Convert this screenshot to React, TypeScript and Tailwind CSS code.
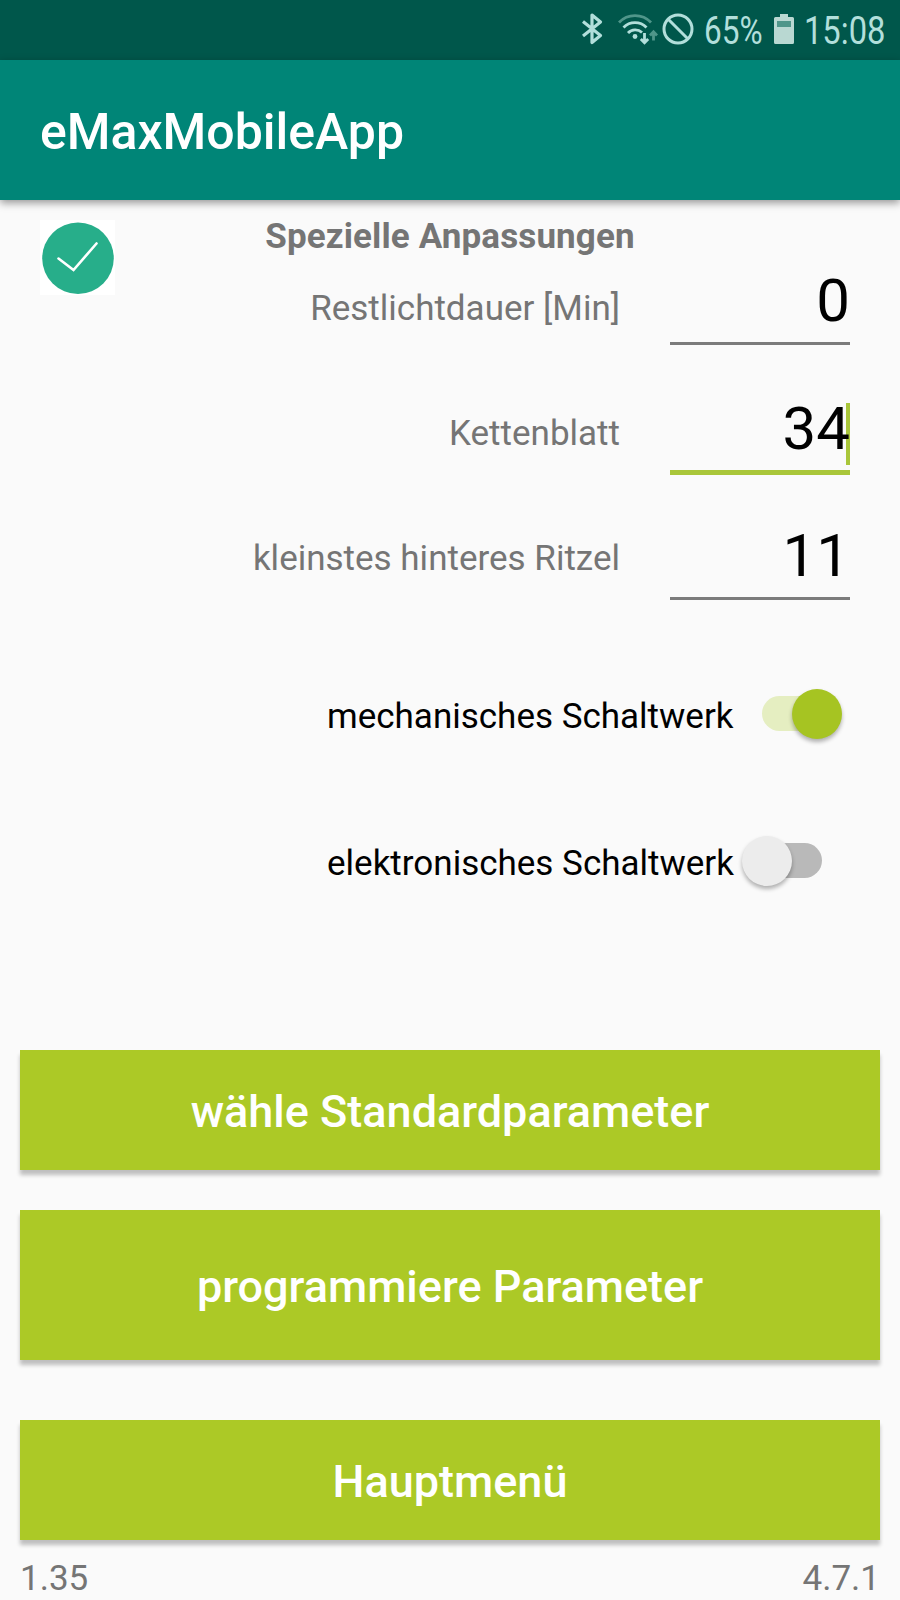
import { ReactNode } from 'react';

interface FieldProps {
  value: string;
  focused?: boolean;
}

interface SwitchRowProps {
  label: string;
  checked?: boolean;
}

function BluetoothIcon() {
  return (
    <svg className="w-[22px] h-[34px] shrink-0" viewBox="0 0 22 34" fill="none" stroke="#b2dfdb" strokeWidth={3.2} strokeLinejoin="round" strokeLinecap="butt" aria-hidden="true">
      <path d="M2 8.500L19.500 22.500L11 29.500V2L19.500 9L2 23" />
    </svg>
  );
}

function WifiIcon() {
  return (
    <svg className="w-[40px] h-[34px] shrink-0" viewBox="0 0 40 34" fill="none" stroke="#b2dfdb" strokeWidth={2.8} aria-hidden="true">
      <path d="M1 9.500A22 22 0 0 1 33 9.500" stroke="#4f968a" />
      <path d="M5.500 14.500A16 16 0 0 1 28.500 14.500" />
      <path d="M10 20A10 10 0 0 1 24 19.500" />
      <circle cx="17" cy="23.500" r="2.400" fill="#b2dfdb" stroke="none" />
      <path d="M26.500 20V29.500M22.800 26L26.500 29.800L30.200 26" />
      <path d="M35.500 27.500V19M32 22.500L35.500 18.800L39 22.500" stroke="#4f968a" />
    </svg>
  );
}

function BlockedIcon() {
  return (
    <svg className="w-[32px] h-[32px] shrink-0 -mt-[2px]" viewBox="0 0 32 32" fill="none" stroke="#b2dfdb" strokeWidth={3} aria-hidden="true">
      <circle cx="16" cy="16" r="14" />
      <path d="M6 6L26 26" />
    </svg>
  );
}

function BatteryIcon() {
  return (
    <svg className="w-[20px] h-[30px] shrink-0 -mt-[2px]" viewBox="0 0 20 30" aria-hidden="true">
      <path d="M6 0H14V3H18.500Q20 3 20 4.500V28.500Q20 30 18.500 30H1.500Q0 30 0 28.500V4.500Q0 3 1.500 3H6Z" fill="#b9d8d2" />
      <path d="M3 7H17V13H3Z" fill="#4f968a" />
    </svg>
  );
}

function StatusBar() {
  return (
    <div className="h-[60px] shrink-0 bg-[#00574b] flex items-center text-[#b2dfdb] text-[38px] leading-[60px]">
      <div className="w-[581px] shrink-0" />
      <BluetoothIcon />
      <div className="w-[15px] shrink-0" />
      <WifiIcon />
      <div className="w-[4px] shrink-0" />
      <BlockedIcon />
      <div className="w-[70px] ml-[10px] pt-[2px] shrink-0">
        <span className="inline-block origin-left scale-x-[0.83]">65%</span>
      </div>
      <BatteryIcon />
      <div className="w-[90px] ml-[10px] pt-[2px] shrink-0">
        <span className="inline-block origin-left scale-x-[0.86]">15:08</span>
      </div>
    </div>
  );
}

function Field({ value, focused }: FieldProps) {
  return (
    <div className="h-[127.5px]">
      <div
        className={`relative w-[180px] text-right text-[60px] leading-[71px] text-black ${
          focused ? 'h-[82px] border-b-[5px] border-[#a9c63a]' : 'h-[80px] border-b-[3px] border-[#7b7b7b]'
        }`}
      >
        {focused && <span className="absolute right-0 top-[10px] w-[4px] h-[62px] bg-[#a9c63a]" />}
        <span className="relative">{value}</span>
      </div>
    </div>
  );
}

function SwitchRow({ label, checked }: SwitchRowProps) {
  return (
    <div className="flex items-center h-[50px] pl-[327px] text-[35px] leading-[50px] text-black">
      <span className="w-[415px] shrink-0 pt-[5px]">{label}</span>
      <div className={`relative w-[80px] h-[50px] ${checked ? 'ml-[20px]' : ''}`}>
        <div
          className={`absolute top-[7px] h-[35px] rounded-full ${
            checked ? 'left-0 w-[70px] bg-[#e5eec1]' : 'right-0 w-[70px] bg-[#b9b9b9]'
          }`}
        />
        <div
          className={`absolute top-0 w-[50px] h-[50px] rounded-full shadow-[0_3px_4px_rgba(0,0,0,0.3)] ${
            checked ? 'right-0 bg-[#a6c422]' : 'left-0 bg-[#ececec]'
          }`}
        />
      </div>
    </div>
  );
}

function ActionButton({ className, children }: { className: string; children: ReactNode }) {
  return (
    <button
      className={`w-full flex items-center justify-center pt-[4px] bg-[#acc926] text-white text-[45px] font-medium shadow-[0_5px_4px_rgba(0,0,0,0.24)] ${className}`}
    >
      {children}
    </button>
  );
}

export default function App() {
  return (
    <div className="w-[900px] h-[1600px] overflow-hidden flex flex-col bg-[#fafafa] font-[Roboto,sans-serif]">
      <StatusBar />
      <header className="h-[140px] shrink-0 pl-10 pt-[4px] flex items-center bg-[#008577] shadow-[0_3px_8px_rgba(0,0,0,0.4)]">
        <h1 className="text-[50px] font-medium text-white">eMaxMobileApp</h1>
      </header>

      <section className="h-[489px] shrink-0 flex">
        <div className="w-[230px] shrink-0 pl-10 pt-5">
          <svg className="w-[75px] h-[75px] bg-white" viewBox="0 0 75 75" fill="none" aria-hidden="true">
            <circle cx="38" cy="38.300" r="35.800" fill="#27ae8a" />
            <path d="M18.500 38.500L33.500 50L56.500 23.500" stroke="white" strokeWidth={2.6} strokeLinecap="round" />
          </svg>
        </div>
        <div className="flex flex-col pt-[16px]">
          <h2 className="w-[440px] h-[41px] text-center text-[35px] leading-[41px] font-bold tracking-[0.12px] text-[#757575]">
            Spezielle Anpassungen
          </h2>
          <div className="flex pt-[8px]">
            <div className="w-[390px] pt-[23px] flex flex-col gap-[84px] text-right text-[35px] leading-[41px] text-[#757575]">
              <span>Restlichtdauer [Min]</span>
              <span>Kettenblatt</span>
              <span>kleinstes hinteres Ritzel</span>
            </div>
            <div className="ml-[50px]">
              <Field value="0" />
              <Field value="34" focused />
              <Field value="11" />
            </div>
          </div>
        </div>
      </section>

      <section className="h-[361px] shrink-0 flex flex-col gap-[97px]">
        <SwitchRow label="mechanisches Schaltwerk" checked />
        <SwitchRow label="elektronisches Schaltwerk" />
      </section>

      <div className="px-5 flex flex-col">
        <ActionButton className="h-[120px]">wähle Standardparameter</ActionButton>
        <ActionButton className="h-[150px] mt-10">programmiere Parameter</ActionButton>
        <ActionButton className="h-[120px] mt-[60px]">Hauptmenü</ActionButton>
      </div>

      <footer className="px-5 pt-[18px] flex justify-between text-[35px] leading-[41px] text-[#757575]">
        <span>1.35</span>
        <span>4.7.1</span>
      </footer>
    </div>
  );
}
